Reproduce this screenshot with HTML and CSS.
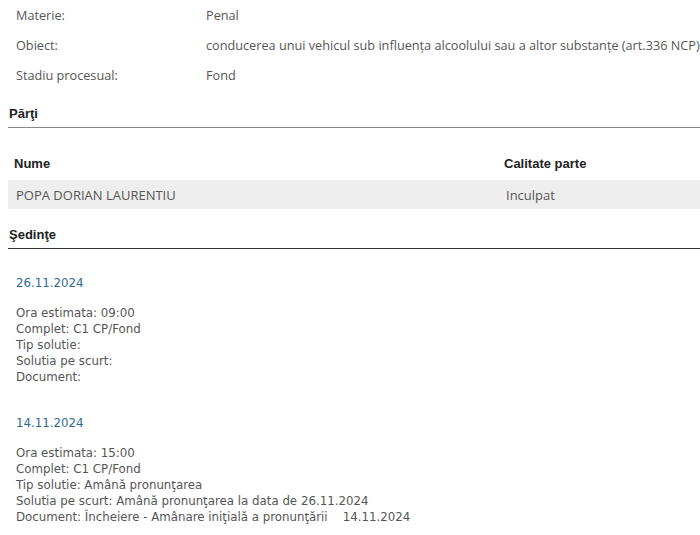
FILE: index.html
```html
<!DOCTYPE html>
<html lang="ro">
<head>
  <meta charset="UTF-8">
  <title>Dosar</title>
  <link rel="stylesheet" href="styles.css">
</head>
<body>

<!-- Detalii dosar -->
<table class="meta">
  <tr><td class="meta-label">Materie:</td><td>Penal</td></tr>
  <tr><td class="meta-label">Obiect:</td><td>conducerea unui vehicul sub influenţa alcoolului sau a altor substanţe (art.336 NCP)</td></tr>
  <tr><td class="meta-label">Stadiu procesual:</td><td>Fond</td></tr>
</table>

<h3 class="section-title">Părţi</h3>
<table class="parti">
  <tr><th class="col-nume">Nume</th><th>Calitate parte</th></tr>
  <tr class="row-alt"><td>POPA DORIAN LAURENTIU</td><td>Inculpat</td></tr>
</table>

<h3 class="section-title dark">Şedinţe</h3>

<div class="sedinta">
  <div class="sedinta-data">26.11.2024</div>
  <div>Ora estimata: 09:00</div>
  <div>Complet: C1 CP/Fond</div>
  <div>Tip solutie: </div>
  <div>Solutia pe scurt: </div>
  <div>Document: </div>
</div>

<div class="sedinta">
  <div class="sedinta-data">14.11.2024</div>
  <div>Ora estimata: 15:00</div>
  <div>Complet: C1 CP/Fond</div>
  <div>Tip solutie: Amână pronunţarea</div>
  <div>Solutia pe scurt: Amână pronunţarea la data de 26.11.2024</div>
  <div>Document: Încheiere - Amânare iniţială a pronunţării&nbsp;&nbsp;&nbsp; 14.11.2024</div>
</div>

</body>
</html>
```

FILE: styles.css
```css
body {
  margin: 0;
  padding: 0 0 0 8px;
  background-color: #fff;
  font-family: "Open Sans", sans-serif;
  color: #555;
}
table {
  border-collapse: collapse;
  width: 100%;
}
.meta {
  table-layout: fixed;
}
.meta td {
  height: 30px;
  padding: 0 0 0 8px;
  font-size: 12.7px;
  color: #555;
  white-space: nowrap;
  vertical-align: middle;
}
.meta .meta-label {
  width: 182px;
}
.section-title {
  margin: 16px 0 0;
  padding: 0 0 5px 1px;
  font-family: "Liberation Sans", Arial, sans-serif;
  font-size: 13px;
  line-height: 16px;
  color: #222;
  border-bottom: 1px solid #888;
}
.section-title.dark {
  margin-top: 18px;
  border-bottom-color: #333;
}
.parti {
  margin-top: 18px;
}
.parti th {
  height: 34px;
  padding: 0 0 0 6px;
  text-align: left;
  font-family: "Liberation Sans", Arial, sans-serif;
  font-size: 13px;
  color: #222;
}
.parti .col-nume {
  width: 484px;
}
.parti td {
  height: 29px;
  padding: 0 0 0 8px;
  font-size: 13px;
  color: #555;
}
.row-alt {
  background-color: #eee;
}
.sedinta {
  padding: 26px 0 4px 8px;
  font-family: "DejaVu Sans", Tahoma, sans-serif;
  font-size: 11.8px;
  line-height: 16px;
  color: #555;
}
.sedinta-data {
  margin-bottom: 14px;
  color: #2c6a96;
}
```
